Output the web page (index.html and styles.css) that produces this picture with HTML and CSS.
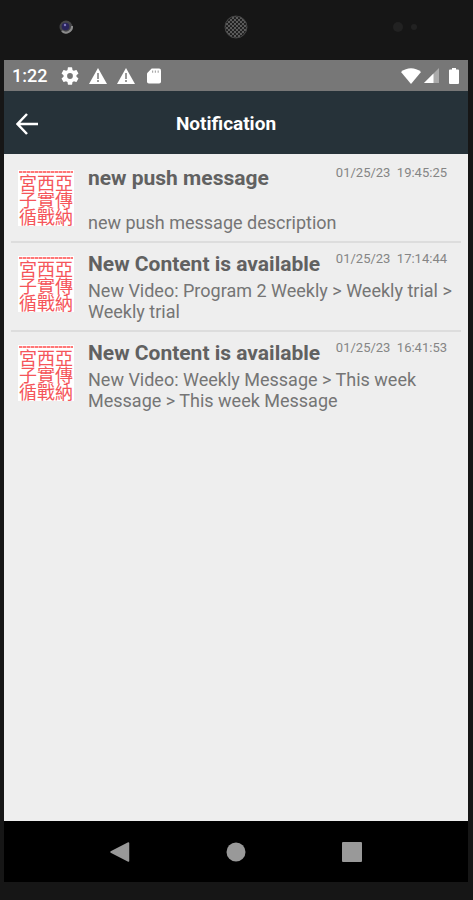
FILE: index.html
```html
<!DOCTYPE html>
<html lang="en">
<head>
<meta charset="utf-8">
<meta name="viewport" content="width=device-width, initial-scale=1">
<title>Notification</title>
<link rel="stylesheet" href="styles.css">
</head>
<body>
<div class="phone">
  <div class="bezel">
    <svg class="camera" viewBox="0 0 14 14" aria-hidden="true">
      <circle cx="7" cy="7" r="6.500" fill="#454548"/>
      <path d="M3 11A6 6 0 0 0 13 6" fill="none" stroke="#8b8b8b" stroke-width="2"/>
      <circle cx="6.500" cy="6.500" r="3.800" fill="#29245a"/>
      <circle cx="6" cy="5" r="1.200" fill="#8178bd"/>
    </svg>
    <svg class="speaker" viewBox="0 0 24 24" aria-hidden="true">
      <defs><pattern id="mesh" width="4" height="4" patternUnits="userSpaceOnUse"><rect width="4" height="4" fill="#5b5b5b"/><circle cx="1" cy="1" r="1.100" fill="#191919"/><circle cx="3" cy="3" r="1.100" fill="#191919"/></pattern></defs>
      <circle cx="12" cy="12" r="11" fill="url(#mesh)" stroke="#444"/>
    </svg>
    <svg class="sensors" viewBox="0 0 26 12" aria-hidden="true"><circle cx="6" cy="6" r="5" fill="#222"/><circle cx="22" cy="6" r="3" fill="#222"/></svg>
  </div>
  <div class="screen">
    <div class="status">
      <span class="clock">1:22</span>
      <svg width="18" height="18" viewBox="2 2 20 20" aria-label="Settings"><path fill="#fff" d="M19.140 12.940c.04-.3.060-.610.060-.940s-.020-.640-.070-.940l2.030-1.580c.18-.140.230-.410.120-.610l-1.920-3.320c-.12-.220-.370-.290-.590-.220l-2.390.960c-.5-.380-1.030-.7-1.620-.940l-.36-2.540A.48.480 0 0 0 13.920 2.400h-3.840c-.24 0-.430.170-.470.410l-.36 2.540c-.59.240-1.130.570-1.620.940l-2.390-.960c-.22-.080-.470 0-.590.220L2.740 8.870c-.12.210-.080.470.120.610l2.030 1.580c-.05.3-.090.630-.090.940s.020.640.070.940l-2.030 1.580c-.18.140-.230.410-.120.610l1.920 3.320c.12.220.370.290.590.220l2.390-.960c.5.380 1.030.7 1.620.940l.36 2.540c.05.240.240.410.480.410h3.840c.24 0 .440-.170.470-.410l.36-2.540c.59-.240 1.130-.560 1.620-.940l2.390.960c.22.080.470 0 .590-.220l1.920-3.320c.12-.220.070-.470-.120-.610zM12 15.200a3.200 3.200 0 1 1 0-6.400 3.200 3.200 0 0 1 0 6.400z"/></svg>
      <svg width="18" height="16" viewBox="0 0 18 16" aria-label="Warning"><path d="M9 0 18 16H0Z" fill="#fff"/><path d="M9 5V11M9 12V14" stroke="#999" stroke-width="2"/></svg>
      <svg width="18" height="16" viewBox="0 0 18 16" aria-label="Warning"><path d="M9 0 18 16H0Z" fill="#fff"/><path d="M9 5V11M9 12V14" stroke="#999" stroke-width="2"/></svg>
      <svg class="card" width="14" height="16" viewBox="0 0 15 16" aria-label="Storage card"><path d="M5 0H13Q15 0 15 2V14Q15 16 13 16H2Q0 16 0 14V5Z" fill="#fff"/><path d="M6 2V4.500M9 2V4.500M12 2V4.500" stroke="#aaa" stroke-width="1.300"/></svg>
      <div class="signals">
        <svg width="20" height="16" viewBox="0 0 20 16" aria-label="Wi-Fi"><path d="M0 4C6-1 14-1 20 4L10 16Z" fill="#fff"/></svg>
        <svg width="15" height="15" viewBox="0 0 15 15" aria-label="Signal"><path d="M15 0V15H0Z" fill="#aaa"/><path d="M9.500 5.500V15H0Z" fill="#fff"/></svg>
        <svg class="battery" width="10" height="16" viewBox="0 0 10 16" aria-label="Battery"><path d="M3 0H7V1.500H9Q10 1.500 10 2.500V15Q10 16 9 16H1Q0 16 0 15V2.500Q0 1.500 1 1.500H3Z" fill="#fff"/></svg>
      </div>
    </div>
    <header class="bar">
      <button class="back" type="button" aria-label="Back"><svg width="22" height="22" viewBox="0 0 22 22"><path d="M11 1 1.500 11 11 21M2 11H22" fill="none" stroke="#fff" stroke-width="2.500"/></svg></button>
      <h1>Notification</h1>
    </header>
    <main class="list">
      <article class="item">
        <div class="logo" lang="zh-Hant">宮西亞<br>子實傳<br>循戰納</div>
        <div class="content">
          <div class="heading"><h2>new push message</h2><time>01/25/23&nbsp; 19:45:25</time></div>
          <p class="spaced">new push message description</p>
        </div>
      </article>
      <article class="item">
        <div class="logo" lang="zh-Hant">宮西亞<br>子實傳<br>循戰納</div>
        <div class="content">
          <div class="heading"><h2>New Content is available</h2><time>01/25/23&nbsp; 17:14:44</time></div>
          <p>New Video: Program 2 Weekly &gt; Weekly trial &gt; Weekly trial</p>
        </div>
      </article>
      <article class="item">
        <div class="logo" lang="zh-Hant">宮西亞<br>子實傳<br>循戰納</div>
        <div class="content">
          <div class="heading"><h2>New Content is available</h2><time>01/25/23&nbsp; 16:41:53</time></div>
          <p>New Video: Weekly Message &gt; This week Message &gt; This week Message</p>
        </div>
      </article>
    </main>
    <nav class="nav">
      <button type="button" aria-label="Back"><svg width="20" height="20" viewBox="0 0 20 20"><path d="M18.500 1V19L1 10Z" fill="#999" stroke="#999" stroke-width="1.500" stroke-linejoin="round"/></svg></button>
      <button type="button" aria-label="Home"><svg width="20" height="20" viewBox="0 0 20 20"><circle cx="10" cy="10" r="9.500" fill="#999"/></svg></button>
      <button type="button" aria-label="Recent apps"><svg width="20" height="20" viewBox="0 0 20 20"><rect width="20" height="20" rx="1" fill="#999"/></svg></button>
    </nav>
  </div>
</div>
</body>
</html>
```
FILE: styles.css
```css
* { box-sizing: border-box; }
body { margin: 0; background: #161616; font-family: Roboto, "Noto Sans CJK TC", sans-serif; }
h1, h2, p { margin: 0; }
svg { display: block; flex: none; }
button { border: 0; padding: 0; background: none; }
.phone { min-height: 100vh; display: flex; flex-direction: column; padding: 0 5px 18px 4px; }
.bezel { height: 60px; display: grid; grid-template-columns: 1fr 24px 1fr; align-items: center; padding-bottom: 6px; }
.camera { width: 14px; height: 14px; margin-left: 55px; }
.speaker { width: 24px; height: 24px; }
.sensors { width: 26px; height: 12px; justify-self: end; margin-right: 50px; }
.screen { flex: 1; display: flex; flex-direction: column; background: #eee; }
.status { height: 31px; display: flex; align-items: center; gap: 10px; padding: 0 9px 0 8px; background: #777; }
.clock { color: #fff; font-size: 18px; font-weight: 500; margin-right: 4px; }
.card { margin-left: 2px; }
.signals { display: flex; align-items: center; gap: 3px; margin-left: auto; }
.battery { margin-left: 7px; }
.bar { height: 63px; display: grid; grid-template-columns: 46px 1fr 66px; align-items: center; padding-top: 2px; background: #263239; color: #fff; }
.back { justify-self: center; }
.bar h1 { font-size: 19px; font-weight: 700; text-align: center; }
.list { flex: 1; padding: 3px 7px 0; }
.item { display: flex; gap: 14px; padding: 9px 8px 8px 7px; border-bottom: 2px solid #ddd; }
.item:last-child { border-bottom: 0; }
.logo { flex: none; width: 56px; height: 56px; margin-top: 4px; padding: 0 1px; background: #fff; color: #f5555a; font-family: "Noto Sans CJK TC", sans-serif; font-size: 18px; line-height: 17px; white-space: nowrap; }
.logo::before { content: ""; display: block; height: 2px; margin: 1px 0; background: repeating-linear-gradient(90deg, #f77 0 3px, #fbb 3px 4px); }
.content { flex: 1; min-width: 0; }
.heading { display: flex; justify-content: space-between; padding-right: 6px; }
.heading h2 { color: #616161; font-size: 21px; line-height: 24px; font-weight: 700; }
.heading time { color: #858585; font-size: 13px; line-height: 13px; font-weight: 400; white-space: nowrap; }
.content p { margin-top: 4px; color: #757575; font-size: 18px; line-height: 21px; }
.content .spaced { margin-top: 22px; }
.nav { height: 61px; display: flex; align-items: center; justify-content: center; gap: 96px; background: #000; }
```
